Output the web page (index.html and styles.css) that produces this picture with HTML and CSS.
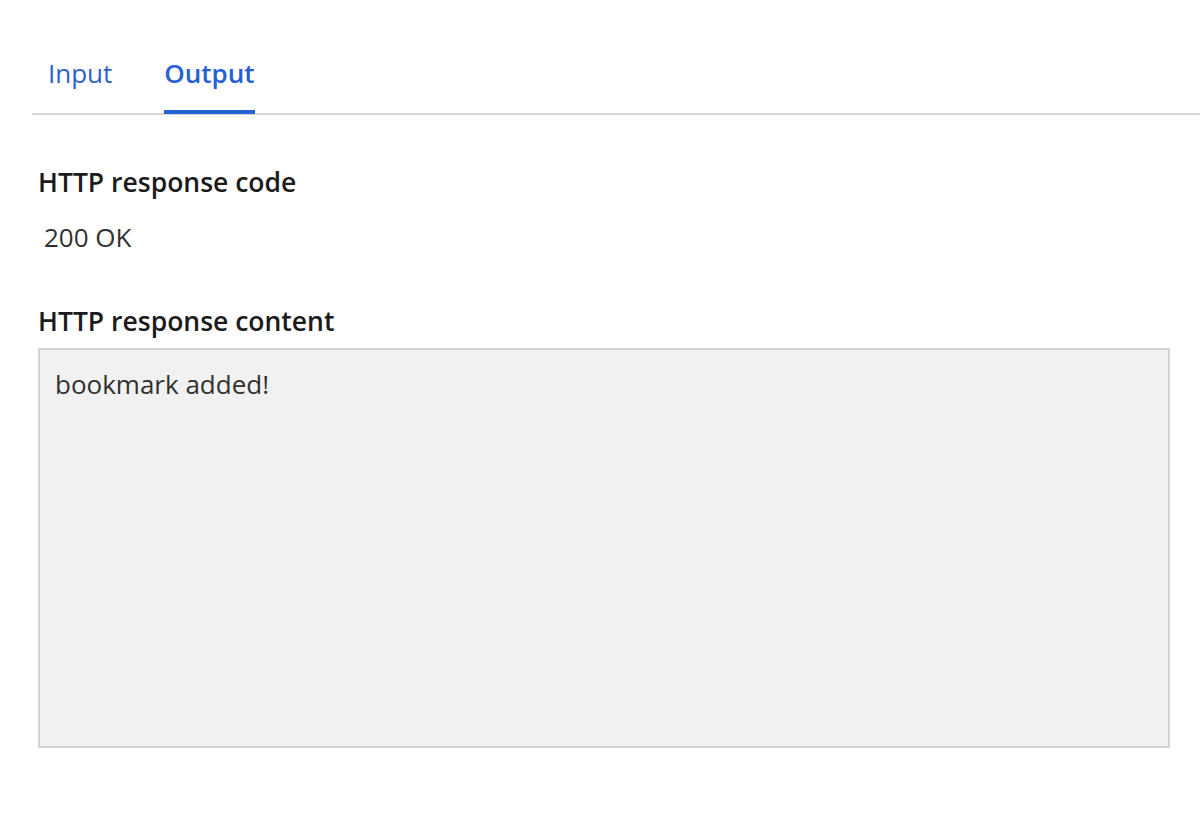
FILE: index.html
```html
<!DOCTYPE html>
<html>
<head>
<meta charset="utf-8">
<link rel="stylesheet" href="styles.css">
</head>
<body>
<div class="page">
  <div class="tabs">
    <div class="tab">Input</div>
    <div class="tab active">Output</div>
  </div>
  <div class="content">
    <div class="field">
      <div class="label">HTTP response code</div>
      <div class="value">200 OK</div>
    </div>
    <div class="field field-content">
      <div class="label">HTTP response content</div>
      <div class="box">bookmark added!</div>
    </div>
  </div>
</div>
</body>
</html>
```
FILE: styles.css
```css
html, body {
  margin: 0;
  padding: 0;
  background: #ffffff;
}
body {
  font-family: "Open Sans", "Noto Sans", sans-serif;
  color: #323130;
}
.page {
  padding: 47px 0 0 32px;
}
.tabs {
  display: flex;
  gap: 52px;
  border-bottom: 2px solid #d6d6d6;
  padding-left: 16px;
}
.tab {
  font-size: 26px;
  color: #2c62d0;
  padding: 8px 0 22px 0;
  line-height: 36px;
  position: relative;
}
.tab.active {
  font-weight: 600;
  color: #2560d6;
}
.tab.active::after {
  content: "";
  position: absolute;
  left: 0;
  right: 0;
  bottom: -1px;
  height: 4px;
  background: #2563d3;
}
.content {
  padding: 49px 30px 0 6px;
}
.label {
  font-size: 26.5px;
  font-weight: 600;
  color: #1b1b1b;
  line-height: 36px;
}
.value {
  font-size: 26px;
  color: #323130;
  padding: 19px 0 0 6px;
  line-height: 36px;
}
.field-content {
  margin-top: 48px;
}
.box {
  margin-top: 9px;
  height: 400px;
  background: #f1f1f1;
  border: 2px solid #d3d3d3;
  padding: 16px 15px;
  box-sizing: border-box;
  font-size: 26px;
  line-height: 36px;
  color: #323130;
}
```
